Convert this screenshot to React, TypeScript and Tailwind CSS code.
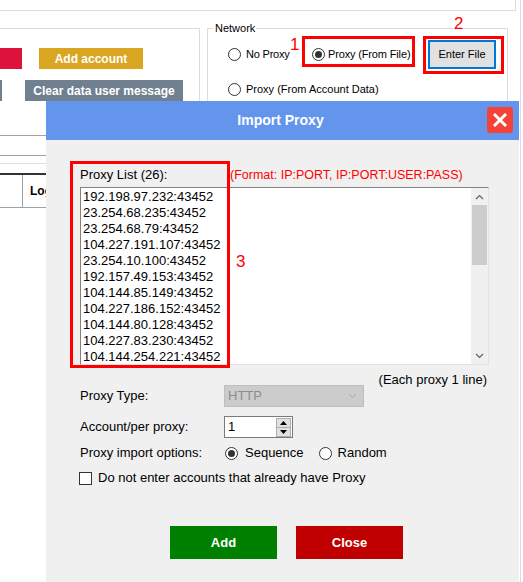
import React from "react";

function Radio({ checked }: { checked?: boolean }) {
  return (
    <span className="w-[13px] h-[13px] rounded-full border border-[#333333] bg-white flex items-center justify-center shrink-0">
      {checked && <span className="w-[7px] h-[7px] rounded-full bg-[#333333]" />}
    </span>
  );
}

const proxies = [
  "192.198.97.232:43452",
  "23.254.68.235:43452",
  "23.254.68.79:43452",
  "104.227.191.107:43452",
  "23.254.10.100:43452",
  "192.157.49.153:43452",
  "104.144.85.149:43452",
  "104.227.186.152:43452",
  "104.144.80.128:43452",
  "104.227.83.230:43452",
  "104.144.254.221:43452",
];

export default function App() {
  return (
    <div className="relative w-[523px] h-[582px] bg-white overflow-hidden flex font-['Liberation_Sans',Arial,sans-serif] text-black">
      {/* background app */}
      <div className="w-[520px] shrink-0">
        <div className="h-[11px] w-[516px] border-r border-b border-[#dcdcdc]" />
        <div className="flex mt-[17px]">
          <div className="w-[200px] shrink-0">
            <div className="h-[107px] border-t border-r border-[#dcdcdc]">
              <div className="flex mt-[19px]">
                <div className="w-[22px] h-[21px] bg-[#dc143c]" />
                <div className="ml-[17px] w-[104px] h-[21px] bg-[#daa520] text-white font-bold text-[12px] flex items-center justify-center">
                  Add account
                </div>
              </div>
              <div className="flex mt-[11px]">
                <div className="w-[2px] h-[21px] bg-[#708090]" />
                <div className="ml-[23px] w-[158px] h-[21px] bg-[#708090] text-white font-bold text-[12px] flex items-center justify-center">
                  Clear data user message
                </div>
              </div>
            </div>
            <div className="h-px bg-[#a0a0a0]" />
            <div className="mt-[19px] h-px bg-[#a0a0a0]" />
            <div className="mt-[7px] h-px bg-[#e0e0e0]" />
            <div className="mt-[9px] h-[35px] border-t-2 border-b border-t-[#333333] border-b-[#a0a0a0] flex">
              <div className="w-[23px] h-full border-r border-[#a0a0a0]" />
              <div className="pl-[7px] flex items-center font-bold text-[12px]">Login</div>
            </div>
          </div>
          <div className="ml-[7px] w-[301px] h-[150px] relative border border-[#dcdcdc]">
            <span className="absolute left-[6px] -top-[7px] bg-white px-[1px] text-[11px] leading-[13px]">
              Network
            </span>
            <div className="mt-[11px] h-[29px] flex items-center pl-[20px] text-[11px]">
              <div className="w-[84px] flex items-center gap-[5px]">
                <Radio />
                <span className="tracking-[-0.2px]">No Proxy</span>
              </div>
              <div className="w-[116px] flex items-center gap-[3px]">
                <Radio checked />
                <span className="tracking-[-0.15px]">Proxy (From File)</span>
              </div>
              <div className="w-[68px] h-[29px] bg-[#e1e1e1] border-2 border-[#0078d7] flex items-center justify-center">
                Enter File
              </div>
            </div>
            <div className="mt-[12px] h-[16px] flex items-center gap-[5px] pl-[20px] text-[11px]">
              <Radio />
              <span>Proxy (From Account Data)</span>
            </div>
          </div>
        </div>
      </div>
      <div className="w-px h-full bg-[#dcdcdc]" />

      {/* annotations on background */}
      <div className="absolute left-[302px] top-[36px] w-[113px] h-[31px] border-[3px] border-[#ff0000]" />
      <div className="absolute left-[423px] top-[36px] w-[81px] h-[38px] border-[3px] border-[#ff0000]" />
      <span className="absolute left-[290px] top-[36px] text-[17px] leading-[17px] text-[#ff0000]">1</span>
      <span className="absolute left-[454px] top-[15px] text-[17px] leading-[17px] text-[#ff0000]">2</span>

      {/* dialog */}
      <div className="absolute left-[46px] top-[101px] w-[473px] h-[481px] bg-[#f0f0f0] flex flex-col text-[13px]">
        <div className="h-[39px] bg-[#6495ed] relative flex items-center justify-center pr-[4px]">
          <span className="text-white font-bold text-[14px]">Import Proxy</span>
          <div className="absolute right-[6px] top-[6px] w-[26px] h-[26px] rounded-[3px] bg-[#f44336] flex items-center justify-center">
            <svg width="14" height="14" viewBox="0 0 14 14">
              <path d="M2 2 L12 12 M12 2 L2 12" stroke="white" strokeWidth="3" strokeLinecap="square" />
            </svg>
          </div>
        </div>

        <div className="pl-[34px] pt-[27px] flex flex-col">
          <div className="h-[16px] leading-[16px] flex">
            <span className="w-[150px]">Proxy List (26):</span>
            <span className="text-[#ff0000] text-[12.5px]">(Format: IP:PORT, IP:PORT:USER:PASS)</span>
          </div>
          <div className="mt-[4px] w-[409px] h-[178px] bg-white border border-t-[#828282] border-l-[#828282] border-r-[#e3e3e3] border-b-[#e3e3e3] flex">
            <div className="flex-1 pl-[2px] pt-[1px] leading-[16px] text-[13px] overflow-hidden">
              {proxies.map((p) => (
                <div key={p}>{p}</div>
              ))}
            </div>
            <div className="w-[17px] bg-[#f0f0f0] flex flex-col">
              <div className="h-[17px] flex items-center justify-center">
                <svg width="9" height="6" viewBox="0 0 9 6">
                  <path d="M1 5 L4.5 1.5 L8 5" stroke="#606060" strokeWidth="1.2" fill="none" />
                </svg>
              </div>
              <div className="flex-1 px-[1px]">
                <div className="h-[60px] bg-[#cdcdcd]" />
              </div>
              <div className="h-[17px] flex items-center justify-center">
                <svg width="9" height="6" viewBox="0 0 9 6">
                  <path d="M1 1 L4.5 4.5 L8 1" stroke="#606060" strokeWidth="1.2" fill="none" />
                </svg>
              </div>
            </div>
          </div>
          <div className="mt-[10px] h-[10px] leading-[10px] w-[409px] text-right pr-[2px]">(Each proxy 1 line)</div>
          <div className="h-[22px] flex items-center">
            <span className="w-[144px]">Proxy Type:</span>
            <div className="w-[140px] h-[22px] bg-[#cccccc] border border-[#bfbfbf] pl-[3px] pr-[6px] text-[#8c8c8c] flex items-center justify-between">
              <span>HTTP</span>
              <svg width="9" height="6" viewBox="0 0 9 6">
                <path d="M1 1 L4.5 4.5 L8 1" stroke="#a8a8a8" strokeWidth="1" fill="none" />
              </svg>
            </div>
          </div>
          <div className="mt-[9px] h-[22px] flex items-center">
            <span className="w-[144px]">Account/per proxy:</span>
            <div className="w-[69px] h-[22px] bg-white border border-[#7a7a7a] pl-[3px] pr-px flex items-center justify-between">
              <span>1</span>
              <div className="w-[15px] h-[19px] flex flex-col">
                <div className="h-[10px] bg-[#e1e1e1] border border-[#adadad] flex items-center justify-center">
                  <svg width="7" height="4" viewBox="0 0 7 4">
                    <path d="M0 4 L3.5 0 L7 4 Z" fill="#000000" />
                  </svg>
                </div>
                <div className="h-[9px] bg-[#e1e1e1] border border-t-0 border-[#adadad] flex items-center justify-center">
                  <svg width="7" height="4" viewBox="0 0 7 4">
                    <path d="M0 0 L3.5 4 L7 0 Z" fill="#000000" />
                  </svg>
                </div>
              </div>
            </div>
          </div>
          <div className="mt-[7px] h-[16px] flex items-center">
            <span className="w-[145px]">Proxy import options:</span>
            <Radio checked />
            <span className="ml-[7px]">Sequence</span>
            <span className="ml-[15px]">
              <Radio />
            </span>
            <span className="ml-[6px]">Random</span>
          </div>
          <div className="mt-[10px] h-[14px] flex items-center -ml-px">
            <span className="w-[13px] h-[13px] border border-[#333333] bg-white shrink-0" />
            <span className="ml-[6px]">Do not enter accounts that already have Proxy</span>
          </div>
          <div className="mt-[41px] ml-[90px] flex gap-[19px]">
            <div className="w-[107px] h-[33px] bg-[#008000] text-white font-bold flex items-center justify-center">Add</div>
            <div className="w-[107px] h-[33px] bg-[#c00000] text-white font-bold flex items-center justify-center">Close</div>
          </div>
        </div>

        <div className="absolute left-[24px] top-[60px] w-[160px] h-[207px] border-[3px] border-[#ff0000]" />
        <span className="absolute left-[190px] top-[152px] text-[17px] leading-[17px] text-[#ff0000]">3</span>
      </div>
    </div>
  );
}
